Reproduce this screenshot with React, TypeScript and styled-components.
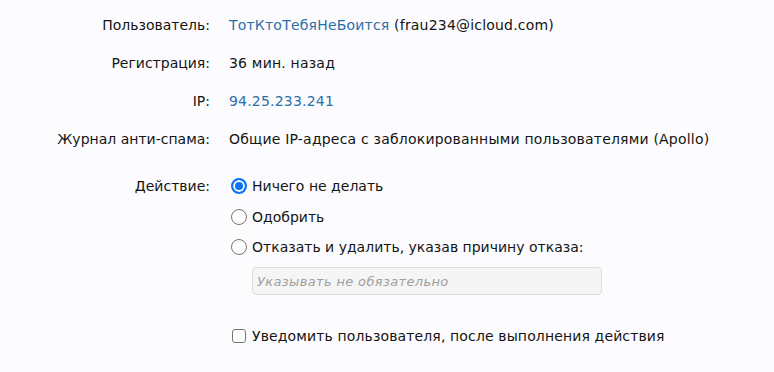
import styled, { createGlobalStyle } from 'styled-components';

const GlobalStyle = createGlobalStyle`
  html, body {
    margin: 0;
    padding: 0;
    background: #fcfcfe;
  }
  body {
    font-family: "DejaVu Sans", "Liberation Sans", sans-serif;
    font-size: 14px;
    color: #141414;
  }
`;

const Form = styled.div`
  padding-top: 6px;
`;

const Row = styled.div<{ $spaced?: boolean }>`
  display: grid;
  grid-template-columns: 210px 1fr;
  column-gap: 19px;
  padding: 9px 0;
  line-height: 20px;
  margin-top: ${(p) => (p.$spaced ? '9px' : '0')};
`;

const Label = styled.div`
  text-align: right;
`;

const Value = styled.div`
  white-space: nowrap;
  letter-spacing: 0.2px;
`;

const UserLink = styled.a`
  color: #2a6fa8;
  text-decoration: none;
`;

const Options = styled.div`
  display: flex;
  flex-direction: column;
  gap: 10.5px;
  margin-left: 2px;
`;

const Option = styled.label<{ $spacing?: number }>`
  display: flex;
  align-items: center;
  gap: 5px;
  white-space: nowrap;
  cursor: pointer;
  letter-spacing: ${(p) => p.$spacing ?? 0}px;
`;

const Radio = styled.input.attrs({ type: 'radio' })`
  appearance: none;
  margin: 0;
  width: 16px;
  height: 16px;
  border: 1px solid #767676;
  border-radius: 50%;
  background: #fff;
  flex-shrink: 0;

  &:checked {
    border: 2px solid #0b74f5;
    background: #0b74f5;
    box-shadow: inset 0 0 0 2px #fff;
  }
`;

const Checkbox = styled.input.attrs({ type: 'checkbox' })`
  appearance: none;
  margin: 0 1px;
  width: 14px;
  height: 14px;
  border: 1px solid #767676;
  border-radius: 3px;
  background: #fff;
  flex-shrink: 0;
`;

const ReasonInput = styled.input`
  box-sizing: border-box;
  width: 350px;
  height: 28px;
  margin: -0.5px 0 20px 21px;
  padding: 0 4px;
  border: 1px solid #dcdcdc;
  border-radius: 4px;
  background: #f5f5f5;
  font-family: inherit;
  font-size: 13px;
  letter-spacing: 0.35px;
  color: #141414;
  outline: none;

  &::placeholder {
    color: #a0a0a0;
    font-style: italic;
  }
`;

export default function App() {
  return (
    <>
      <GlobalStyle />
      <Form>
        <Row>
          <Label>Пользователь:</Label>
          <Value>
            <UserLink href="#">ТотКтоТебяНеБоится</UserLink> (frau234@icloud.com)
          </Value>
        </Row>
        <Row>
          <Label>Регистрация:</Label>
          <Value>36 мин. назад</Value>
        </Row>
        <Row>
          <Label>IP:</Label>
          <Value>
            <UserLink href="#">94.25.233.241</UserLink>
          </Value>
        </Row>
        <Row>
          <Label>Журнал анти-спама:</Label>
          <Value>Общие IP-адреса с заблокированными пользователями (Apollo)</Value>
        </Row>
        <Row $spaced>
          <Label>Действие:</Label>
          <Options>
            <Option>
              <Radio name="action" defaultChecked />
              Ничего не делать
            </Option>
            <Option>
              <Radio name="action" />
              Одобрить
            </Option>
            <Option>
              <Radio name="action" />
              Отказать и удалить, указав причину отказа:
            </Option>
            <ReasonInput placeholder="Указывать не обязательно" />
            <Option $spacing={0.13}>
              <Checkbox />
              Уведомить пользователя, после выполнения действия
            </Option>
          </Options>
        </Row>
      </Form>
    </>
  );
}
